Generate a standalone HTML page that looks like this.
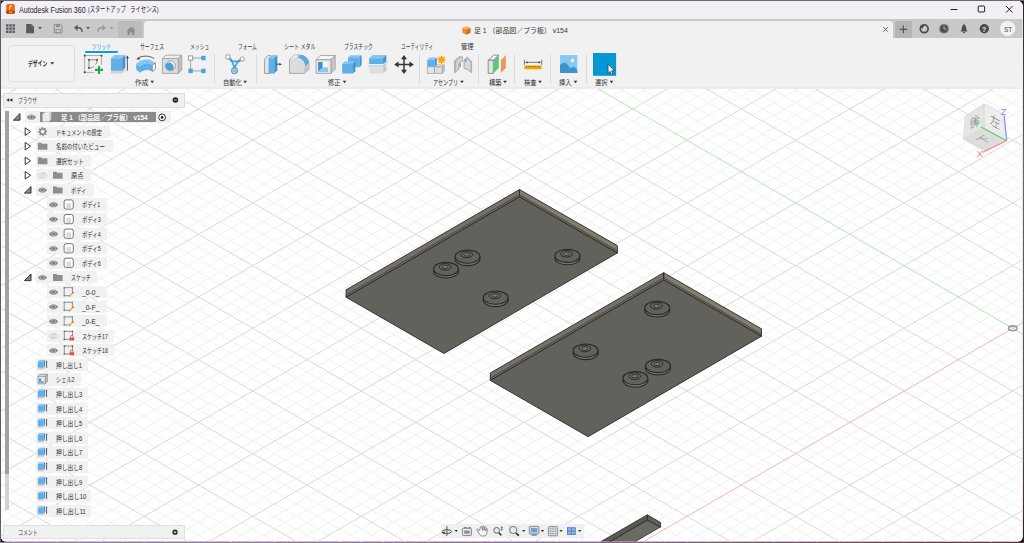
<!DOCTYPE html>
<html lang="ja"><head><meta charset="utf-8"><title>Autodesk Fusion 360</title>
<style>
html,body{margin:0;padding:0;width:1024px;height:543px;overflow:hidden;background:#17101a;}
#edge{position:absolute;left:0;top:0;width:1024px;height:543px;background:linear-gradient(#6c6878,#6c6878) 0 0/1024px 1.2px no-repeat,linear-gradient(90deg,#987e9e,#8a7090 55%,#55363f) 0 541.5px/1024px 1.5px no-repeat,linear-gradient(#5c5c70,#5c5c70) 0 0/1.2px 543px no-repeat,linear-gradient(#2a2226,#6a6068 30%,#5a4a50 80%,#3a1a20) 1022.600px 0/1.4px 543px no-repeat,#17101a}
body{font-family:"Liberation Sans","Noto Sans CJK JP",sans-serif;}
#win{position:absolute;left:0;top:0;width:1024px;height:543px;clip-path:inset(1px 1.3px 1.4px 1px round 5px);background:#fff;overflow:hidden}
#cv{position:absolute;left:0;top:0}
.tx{z-index:5;position:absolute;white-space:nowrap;line-height:20px;height:20px;transform-origin:0 50%;display:block}
.abs{position:absolute}
</style></head><body>
<div id="edge"></div>
<div id="win">
<svg id="cv" width="1024" height="543" viewBox="0 0 1024 543">
<rect width="1024" height="543" fill="#ffffff"/>
<path d="M-10.0 91.4L1034.0 -511.4M-10.0 116.5L1034.0 -486.3M-10.0 540.1L1034.0 1142.9M-10.0 129.0L1034.0 -473.8M-10.0 527.6L1034.0 1130.4M-10.0 141.6L1034.0 -461.2M-10.0 515.0L1034.0 1117.8M-10.0 154.1L1034.0 -448.7M-10.0 502.5L1034.0 1105.3M-10.0 179.2L1034.0 -423.6M-10.0 477.4L1034.0 1080.2M-10.0 191.7L1034.0 -411.1M-10.0 464.9L1034.0 1067.7M-10.0 204.2L1034.0 -398.6M-10.0 452.4L1034.0 1055.2M-10.0 216.8L1034.0 -386.0M-10.0 439.8L1034.0 1042.6M-10.0 241.8L1034.0 -360.9M-10.0 414.8L1034.0 1017.5M-10.0 254.4L1034.0 -348.4M-10.0 402.2L1034.0 1005.0M-10.0 266.9L1034.0 -335.9M-10.0 389.7L1034.0 992.5M-10.0 279.4L1034.0 -323.3M-10.0 377.2L1034.0 979.9M-10.0 304.5L1034.0 -298.3M-10.0 352.1L1034.0 954.9M-10.0 317.1L1034.0 -285.7M-10.0 339.5L1034.0 942.3M-10.0 329.6L1034.0 -273.2M-10.0 327.0L1034.0 929.8M-10.0 342.1L1034.0 -260.7M-10.0 314.5L1034.0 917.3M-10.0 367.2L1034.0 -235.6M-10.0 289.4L1034.0 892.2M-10.0 379.7L1034.0 -223.0M-10.0 276.9L1034.0 879.6M-10.0 392.3L1034.0 -210.5M-10.0 264.3L1034.0 867.1M-10.0 404.8L1034.0 -198.0M-10.0 251.8L1034.0 854.6M-10.0 429.9L1034.0 -172.9M-10.0 226.7L1034.0 829.5M-10.0 442.4L1034.0 -160.4M-10.0 214.2L1034.0 817.0M-10.0 455.0L1034.0 -147.8M-10.0 201.6L1034.0 804.4M-10.0 467.5L1034.0 -135.3M-10.0 189.1L1034.0 791.9M-10.0 492.6L1034.0 -110.2M-10.0 164.0L1034.0 766.8M-10.0 505.1L1034.0 -97.7M-10.0 151.5L1034.0 754.3M-10.0 517.6L1034.0 -85.2M-10.0 139.0L1034.0 741.8M-10.0 530.2L1034.0 -72.6M-10.0 126.4L1034.0 729.2M-10.0 555.2L1034.0 -47.5M-10.0 101.4L1034.0 704.1M-10.0 567.8L1034.0 -35.0M-10.0 88.8L1034.0 691.6M-10.0 580.3L1034.0 -22.5M-10.0 76.3L1034.0 679.1M-10.0 592.8L1034.0 -9.9M-10.0 63.8L1034.0 666.5M-10.0 617.9L1034.0 15.1M-10.0 38.7L1034.0 641.5M-10.0 630.5L1034.0 27.7M-10.0 26.1L1034.0 628.9M-10.0 643.0L1034.0 40.2M-10.0 13.6L1034.0 616.4M-10.0 655.5L1034.0 52.7M-10.0 1.1L1034.0 603.9M-10.0 680.6L1034.0 77.8M-10.0 -24.0L1034.0 578.8M-10.0 693.1L1034.0 90.4M-10.0 -36.5L1034.0 566.2M-10.0 705.7L1034.0 102.9M-10.0 -49.1L1034.0 553.7M-10.0 718.2L1034.0 115.4M-10.0 -61.6L1034.0 541.2M-10.0 743.3L1034.0 140.5M-10.0 -86.7L1034.0 516.1M-10.0 755.8L1034.0 153.0M-10.0 -99.2L1034.0 503.6M-10.0 768.4L1034.0 165.6M-10.0 -111.8L1034.0 491.0M-10.0 780.9L1034.0 178.1M-10.0 -124.3L1034.0 478.5M-10.0 806.0L1034.0 203.2M-10.0 -149.4L1034.0 453.4M-10.0 818.5L1034.0 215.7M-10.0 -161.9L1034.0 440.9M-10.0 831.0L1034.0 228.2M-10.0 -174.4L1034.0 428.4M-10.0 843.6L1034.0 240.8M-10.0 -187.0L1034.0 415.8M-10.0 868.6L1034.0 265.9M-10.0 -212.0L1034.0 390.7M-10.0 881.2L1034.0 278.4M-10.0 -224.6L1034.0 378.2M-10.0 893.7L1034.0 290.9M-10.0 -237.1L1034.0 365.7M-10.0 906.2L1034.0 303.5M-10.0 -249.6L1034.0 353.1M-10.0 931.3L1034.0 328.5M-10.0 -274.7L1034.0 328.1M-10.0 943.9L1034.0 341.1M-10.0 -287.3L1034.0 315.5M-10.0 956.4L1034.0 353.6M-10.0 -299.8L1034.0 303.0M-10.0 968.9L1034.0 366.1M-10.0 -312.3L1034.0 290.5M-10.0 994.0L1034.0 391.2M-10.0 -337.4L1034.0 265.4M-10.0 1006.5L1034.0 403.8M-10.0 -349.9L1034.0 252.8M-10.0 1019.1L1034.0 416.3M-10.0 -362.5L1034.0 240.3M-10.0 1031.6L1034.0 428.8M-10.0 -375.0L1034.0 227.8M-10.0 1056.7L1034.0 453.9M-10.0 -400.1L1034.0 202.7M-10.0 1069.2L1034.0 466.4M-10.0 -412.6L1034.0 190.2M-10.0 1081.8L1034.0 479.0M-10.0 -425.2L1034.0 177.6M-10.0 1094.3L1034.0 491.5M-10.0 -437.7L1034.0 165.1M-10.0 1119.4L1034.0 516.6M-10.0 -462.8L1034.0 140.0M-10.0 1131.9L1034.0 529.1M-10.0 -475.3L1034.0 127.5M-10.0 1144.4L1034.0 541.6M-10.0 -487.8L1034.0 115.0M-10.0 -500.4L1034.0 102.4" stroke="#f0f0f0" stroke-width="1" fill="none"/>
<path d="M-10.0 103.9L1034.0 -498.8M-10.0 166.6L1034.0 -436.2M-10.0 490.0L1034.0 1092.8M-10.0 229.3L1034.0 -373.5M-10.0 427.3L1034.0 1030.1M-10.0 292.0L1034.0 -310.8M-10.0 364.6L1034.0 967.4M-10.0 354.7L1034.0 -248.1M-10.0 301.9L1034.0 904.7M-10.0 417.3L1034.0 -185.4M-10.0 239.3L1034.0 842.0M-10.0 480.0L1034.0 -122.8M-10.0 176.6L1034.0 779.4M-10.0 542.7L1034.0 -60.1M-10.0 113.9L1034.0 716.7M-10.0 605.4L1034.0 2.6M-10.0 51.2L1034.0 654.0M-10.0 668.1L1034.0 65.3M-10.0 -11.5L1034.0 591.3M-10.0 730.7L1034.0 128.0M-10.0 -74.1L1034.0 528.6M-10.0 793.4L1034.0 190.6M-10.0 -136.8L1034.0 466.0M-10.0 856.1L1034.0 253.3M-10.0 -199.5L1034.0 403.3M-10.0 981.5L1034.0 378.7M-10.0 -324.9L1034.0 277.9M-10.0 1044.1L1034.0 441.4M-10.0 -387.5L1034.0 215.2M-10.0 1106.8L1034.0 504.0M-10.0 -450.2L1034.0 152.6M-10.0 -512.9L1034.0 89.9" stroke="#d9d9d9" stroke-width="1" fill="none"/>
<line x1="524.2" y1="46.2" x2="1045.3" y2="347.1" stroke="#a8eca8" stroke-width="1"/>
<line x1="578.5" y1="579.0" x2="1045.3" y2="309.5" stroke="#f6b4b4" stroke-width="1"/>
<ellipse cx="1012.8" cy="328.3" rx="4.2" ry="2.4" fill="none" stroke="#9a9a9a" stroke-width="1.6"/>
<polygon points="346.1,289.8 519.5,189.5 519.5,196.9 346.1,297.2" fill="#75726a" stroke="#2b2a27" stroke-width="0.9" stroke-linejoin="round" />
<polygon points="519.5,189.5 617.3,245.6 617.3,253.0 519.5,196.9" fill="#827f71" stroke="#2b2a27" stroke-width="0.9" stroke-linejoin="round" />
<polygon points="346.1,294.9 519.5,194.6 617.3,250.7 617.3,253.0 519.5,196.9 346.1,297.2" fill="#6a685f" stroke="#2f2e2a" stroke-width="0.55" stroke-linejoin="round" />
<polygon points="346.1,297.2 443.9,353.5 617.3,253.0 519.5,196.9" fill="#62615c" stroke="#2b2a27" stroke-width="0.9" stroke-linejoin="round" />
<line x1="519.5" y1="189.5" x2="519.5" y2="196.9" stroke="#2b2a27" stroke-width="0.7"/>
<ellipse cx="446.0" cy="271.4" rx="12.5" ry="6.6" fill="#77746a" stroke="#2a2925" stroke-width="1.1"/>
<ellipse cx="446.0" cy="269.0" rx="12.5" ry="6.6" fill="#62615b" stroke="#2a2925" stroke-width="1.1"/>
<ellipse cx="445.2" cy="266.9" rx="5.9" ry="3.3" fill="#676660" stroke="#2c2b27" stroke-width="1"/>
<ellipse cx="445.2" cy="266.9" rx="3.0" ry="1.7" fill="#7b7a72" stroke="#2c2b27" stroke-width="0.9"/>
<ellipse cx="467.5" cy="259.0" rx="12.5" ry="6.6" fill="#77746a" stroke="#2a2925" stroke-width="1.1"/>
<ellipse cx="467.5" cy="256.6" rx="12.5" ry="6.6" fill="#62615b" stroke="#2a2925" stroke-width="1.1"/>
<ellipse cx="466.7" cy="254.5" rx="5.9" ry="3.3" fill="#676660" stroke="#2c2b27" stroke-width="1"/>
<ellipse cx="466.7" cy="254.5" rx="3.0" ry="1.7" fill="#7b7a72" stroke="#2c2b27" stroke-width="0.9"/>
<ellipse cx="567.4" cy="258.2" rx="12.5" ry="6.6" fill="#77746a" stroke="#2a2925" stroke-width="1.1"/>
<ellipse cx="567.4" cy="255.8" rx="12.5" ry="6.6" fill="#62615b" stroke="#2a2925" stroke-width="1.1"/>
<ellipse cx="566.6" cy="253.7" rx="5.9" ry="3.3" fill="#676660" stroke="#2c2b27" stroke-width="1"/>
<ellipse cx="566.6" cy="253.7" rx="3.0" ry="1.7" fill="#7b7a72" stroke="#2c2b27" stroke-width="0.9"/>
<ellipse cx="495.7" cy="300.0" rx="12.5" ry="6.6" fill="#77746a" stroke="#2a2925" stroke-width="1.1"/>
<ellipse cx="495.7" cy="297.6" rx="12.5" ry="6.6" fill="#62615b" stroke="#2a2925" stroke-width="1.1"/>
<ellipse cx="494.9" cy="295.5" rx="5.9" ry="3.3" fill="#676660" stroke="#2c2b27" stroke-width="1"/>
<ellipse cx="494.9" cy="295.5" rx="3.0" ry="1.7" fill="#7b7a72" stroke="#2c2b27" stroke-width="0.9"/>
<polygon points="490.3,373.0 663.7,272.7 663.7,280.1 490.3,380.4" fill="#75726a" stroke="#2b2a27" stroke-width="0.9" stroke-linejoin="round" />
<polygon points="663.7,272.7 761.5,328.8 761.5,336.2 663.7,280.1" fill="#827f71" stroke="#2b2a27" stroke-width="0.9" stroke-linejoin="round" />
<polygon points="490.3,378.1 663.7,277.8 761.5,333.9 761.5,336.2 663.7,280.1 490.3,380.4" fill="#6a685f" stroke="#2f2e2a" stroke-width="0.55" stroke-linejoin="round" />
<polygon points="490.3,380.4 588.1,436.7 761.5,336.2 663.7,280.1" fill="#62615c" stroke="#2b2a27" stroke-width="0.9" stroke-linejoin="round" />
<line x1="663.7" y1="272.7" x2="663.7" y2="280.1" stroke="#2b2a27" stroke-width="0.7"/>
<ellipse cx="657.2" cy="310.4" rx="12.5" ry="6.6" fill="#77746a" stroke="#2a2925" stroke-width="1.1"/>
<ellipse cx="657.2" cy="308.0" rx="12.5" ry="6.6" fill="#62615b" stroke="#2a2925" stroke-width="1.1"/>
<ellipse cx="656.4" cy="305.9" rx="5.9" ry="3.3" fill="#676660" stroke="#2c2b27" stroke-width="1"/>
<ellipse cx="656.4" cy="305.9" rx="3.0" ry="1.7" fill="#7b7a72" stroke="#2c2b27" stroke-width="0.9"/>
<ellipse cx="585.6" cy="353.0" rx="12.5" ry="6.6" fill="#77746a" stroke="#2a2925" stroke-width="1.1"/>
<ellipse cx="585.6" cy="350.6" rx="12.5" ry="6.6" fill="#62615b" stroke="#2a2925" stroke-width="1.1"/>
<ellipse cx="584.8" cy="348.5" rx="5.9" ry="3.3" fill="#676660" stroke="#2c2b27" stroke-width="1"/>
<ellipse cx="584.8" cy="348.5" rx="3.0" ry="1.7" fill="#7b7a72" stroke="#2c2b27" stroke-width="0.9"/>
<ellipse cx="658.0" cy="368.4" rx="12.5" ry="6.6" fill="#77746a" stroke="#2a2925" stroke-width="1.1"/>
<ellipse cx="658.0" cy="366.0" rx="12.5" ry="6.6" fill="#62615b" stroke="#2a2925" stroke-width="1.1"/>
<ellipse cx="657.2" cy="363.9" rx="5.9" ry="3.3" fill="#676660" stroke="#2c2b27" stroke-width="1"/>
<ellipse cx="657.2" cy="363.9" rx="3.0" ry="1.7" fill="#7b7a72" stroke="#2c2b27" stroke-width="0.9"/>
<ellipse cx="635.4" cy="380.6" rx="12.5" ry="6.6" fill="#77746a" stroke="#2a2925" stroke-width="1.1"/>
<ellipse cx="635.4" cy="378.2" rx="12.5" ry="6.6" fill="#62615b" stroke="#2a2925" stroke-width="1.1"/>
<ellipse cx="634.6" cy="376.1" rx="5.9" ry="3.3" fill="#676660" stroke="#2c2b27" stroke-width="1"/>
<ellipse cx="634.6" cy="376.1" rx="3.0" ry="1.7" fill="#7b7a72" stroke="#2c2b27" stroke-width="0.9"/>
<polygon points="647.4,514.8 647.4,520.2 538.8,582.9 538.8,577.5" fill="#5a584f" stroke="#2b2a27" stroke-width="0.8" stroke-linejoin="round" />
<polygon points="647.4,520.2 660.6,526.9 552.0,589.6 538.8,582.9" fill="#6a6a65" stroke="#2b2a27" stroke-width="0.8" stroke-linejoin="round" />
<polygon points="647.4,514.8 660.6,522.5 660.6,526.9 647.4,520.2" fill="#605e56" stroke="#2b2a27" stroke-width="0.8" stroke-linejoin="round" />
<g opacity="0.76"><polygon points="984.2,103.8 965.2,116.3 963.5,139.5 984.2,127.9" fill="#dedede" stroke="#c4c4c4" stroke-width="0.6" stroke-linejoin="round"/><polygon points="984.2,103.8 1003.5,114.3 1006.7,140.8 984.2,127.9" fill="#e9e9e9" stroke="#c4c4c4" stroke-width="0.6" stroke-linejoin="round"/><polygon points="984.2,127.9 963.5,139.5 984.8,151.1 1006.7,140.8" fill="#d4d4d4" stroke="#c4c4c4" stroke-width="0.6" stroke-linejoin="round"/></g><text transform="matrix(0.790 -0.520 -0.070 0.967 974.5 122.2)" x="0" y="0" font-size="13" text-anchor="middle" dominant-baseline="central" fill="#787878" font-weight="300" font-family="Liberation Sans, Noto Sans CJK JP, sans-serif">後</text><text transform="matrix(0.804 0.438 0.000 1.000 995.1 122.2)" x="0" y="0" font-size="13.5" text-anchor="middle" dominant-baseline="central" fill="#787878" font-weight="300" font-family="Liberation Sans, Noto Sans CJK JP, sans-serif">左</text><text transform="matrix(0.863 -0.483 0.938 0.537 984.2 139.8)" x="0" y="0" font-size="11" text-anchor="middle" dominant-baseline="central" fill="#787878" font-weight="300" font-family="Liberation Sans, Noto Sans CJK JP, sans-serif">下</text><path d="M1006.7 140.8L1004.1 115.6" stroke="#9090ff" stroke-width="1.3"/><path d="M1006.7 140.8L980.9 127" stroke="#5cd65c" stroke-width="1.2"/><path d="M1006.7 140.8L982.4 152.4" stroke="#ff8a8a" stroke-width="1.2"/><text x="1003.6" y="115.0" font-size="9.5" font-weight="400" text-anchor="middle" fill="#8a8aff" font-family="Liberation Sans, sans-serif">Z</text><text x="979.6" y="156.8" font-size="9.5" font-weight="400" text-anchor="middle" fill="#ff8080" font-family="Liberation Sans, sans-serif">X</text><text x="976.8" y="126.6" font-size="9.5" font-weight="400" text-anchor="middle" fill="#55d455" font-family="Liberation Sans, sans-serif">Y</text>
</svg>
<div class="abs" style="left:0.0px;top:0.0px;width:1024.0px;height:19.2px;background:#f3eff7;"></div>
<span id="t0" class="tx " style="left:19.1px;top:0.6px;font-size:8.2px;color:#1b1b1b;font-weight:400;transform:scaleX(0.8671)">Autodesk Fusion 360</span>
<span id="t1" class="tx " style="left:88.0px;top:0.4px;font-size:7.5px;color:#1b1b1b;font-weight:400;transform:scaleX(0.6909)">(スタートアップ</span>
<span id="t2" class="tx " style="left:129.7px;top:0.4px;font-size:7.5px;color:#1b1b1b;font-weight:400;transform:scaleX(0.7175)">ライセンス)</span>
<div class="abs" style="left:0.0px;top:19.2px;width:1024.0px;height:18.8px;background:#c9c9c9;"></div>
<div class="abs" style="left:118.0px;top:21.0px;width:24.0px;height:17.0px;background:#bcbcbc;border-radius:3px 3px 0 0;"></div>
<div class="abs" style="left:143.8px;top:21.0px;width:749.4px;height:17.2px;background:#f1f1f1;border-radius:4px 4px 0 0;"></div>
<div class="abs" style="left:895.0px;top:21.0px;width:16.8px;height:17.0px;background:#b4b4b4;border-radius:2px 2px 0 0;"></div>
<span id="t3" class="tx " style="left:473.7px;top:21.3px;font-size:7.2px;color:#333;font-weight:400;transform:scaleX(0.9625)">足 1 （部品図／プラ板） v154</span>
<span id="t4" class="tx " style="left:982.2px;top:19.9px;font-size:8px;color:#f0f0f0;font-weight:700;transform:scaleX(0.8588)">?</span>
<span id="t5" class="tx " style="left:1003.6px;top:19.5px;font-size:7.5px;color:#444;font-weight:400;transform:scaleX(0.8547)">ST</span>
<div class="abs" style="left:0.0px;top:38.0px;width:1024.0px;height:49.0px;background:#f1f1f1;"></div>
<div class="abs" style="left:0.0px;top:86.9px;width:1024.0px;height:2.5px;background:linear-gradient(#ececec,#ebebeb 70%,#f4f4f4);"></div>
<div class="abs" style="left:1021.8px;top:19.2px;width:1.6px;height:70.0px;background:#f1f1f1;"></div>
<div class="abs" style="left:1.0px;top:19.2px;width:1.0px;height:18.8px;background:#d4d4d4;"></div>
<div class="abs" style="left:7.5px;top:44.6px;width:67.5px;height:37.0px;background:#f3f3f3;border:1px solid #dfdfdf;border-radius:4px;box-sizing:border-box;"></div>
<span id="t6" class="tx " style="left:27.5px;top:54.1px;font-size:7.1px;color:#2b2b2b;font-weight:700;transform:scaleX(0.6802)">デザイン</span>
<span id="t7" class="tx " style="left:92.0px;top:36.6px;font-size:7.1px;color:#1b8fd6;font-weight:400;transform:scaleX(0.6696)">ソリッド</span>
<span id="t8" class="tx " style="left:139.7px;top:36.6px;font-size:7.1px;color:#333;font-weight:400;transform:scaleX(0.6848)">サーフェス</span>
<span id="t9" class="tx " style="left:189.5px;top:36.6px;font-size:7.1px;color:#333;font-weight:400;transform:scaleX(0.6837)">メッシュ</span>
<span id="t10" class="tx " style="left:237.6px;top:36.6px;font-size:7.1px;color:#333;font-weight:400;transform:scaleX(0.6638)">フォーム</span>
<span id="t11" class="tx " style="left:284.4px;top:36.6px;font-size:7.1px;color:#333;font-weight:400;transform:scaleX(0.7094)">シート メタル</span>
<span id="t12" class="tx " style="left:344.4px;top:36.6px;font-size:7.1px;color:#333;font-weight:400;transform:scaleX(0.6789)">プラスチック</span>
<span id="t13" class="tx " style="left:401.0px;top:36.6px;font-size:7.1px;color:#333;font-weight:400;transform:scaleX(0.6617)">ユーティリティ</span>
<span id="t14" class="tx " style="left:461.2px;top:36.6px;font-size:7.1px;color:#333;font-weight:400;transform:scaleX(0.8811)">管理</span>
<div class="abs" style="left:84.8px;top:50.8px;width:33.6px;height:1.9px;background:#0f9ad8;border-radius:1px;"></div>
<span id="t15" class="tx " style="left:135.0px;top:72.7px;font-size:7.1px;color:#333;font-weight:400;transform:scaleX(0.9374)">作成</span>
<span id="t16" class="tx " style="left:223.2px;top:72.7px;font-size:7.1px;color:#333;font-weight:400;transform:scaleX(0.8787)">自動化</span>
<span id="t17" class="tx " style="left:327.8px;top:72.7px;font-size:7.1px;color:#333;font-weight:400;transform:scaleX(0.8811)">修正</span>
<span id="t18" class="tx " style="left:433.3px;top:72.7px;font-size:7.1px;color:#333;font-weight:400;transform:scaleX(0.7146)">アセンブリ</span>
<span id="t19" class="tx " style="left:488.5px;top:72.7px;font-size:7.1px;color:#333;font-weight:400;transform:scaleX(0.8811)">構築</span>
<span id="t20" class="tx " style="left:523.5px;top:72.7px;font-size:7.1px;color:#333;font-weight:400;transform:scaleX(0.8811)">検査</span>
<span id="t21" class="tx " style="left:559.0px;top:72.7px;font-size:7.1px;color:#333;font-weight:400;transform:scaleX(0.8811)">挿入</span>
<span id="t22" class="tx " style="left:595.0px;top:72.7px;font-size:7.1px;color:#333;font-weight:400;transform:scaleX(0.8670)">選択</span>
<div class="abs" style="left:213.8px;top:54.3px;width:1.0px;height:30.0px;background:#dcdcdc;"></div>
<div class="abs" style="left:255.8px;top:54.3px;width:1.0px;height:30.0px;background:#dcdcdc;"></div>
<div class="abs" style="left:419.3px;top:54.3px;width:1.0px;height:30.0px;background:#dcdcdc;"></div>
<div class="abs" style="left:477.9px;top:54.3px;width:1.0px;height:30.0px;background:#dcdcdc;"></div>
<div class="abs" style="left:514.0px;top:54.3px;width:1.0px;height:30.0px;background:#dcdcdc;"></div>
<div class="abs" style="left:549.9px;top:54.3px;width:1.0px;height:30.0px;background:#dcdcdc;"></div>
<div class="abs" style="left:586.0px;top:54.3px;width:1.0px;height:30.0px;background:#dcdcdc;"></div>
<div class="abs" style="left:3.3px;top:92.5px;width:182.0px;height:15.0px;background:#f0f0f0;border:1px solid #dedede;box-sizing:border-box;"></div>
<span id="t23" class="tx " style="left:18.2px;top:90.9px;font-size:7.1px;color:#444;font-weight:400;transform:scaleX(0.6696)">ブラウザ</span>
<div class="abs" style="left:5.4px;top:111.0px;width:3.3px;height:399.0px;background:#d2d2d2;"></div>
<div class="abs" style="left:5.4px;top:111.0px;width:3.3px;height:363.0px;background:#a2a2a2;"></div>
<div class="abs" style="left:25.0px;top:110.9px;width:146.0px;height:12.2px;background:#f1f1f1;"></div>
<div class="abs" style="left:40.0px;top:112.1px;width:115.6px;height:9.7px;background:#8b8b8b;"></div>
<span id="t24" class="tx " style="left:60.5px;top:107.9px;font-size:7.1px;color:#ffffff;font-weight:700;transform:scaleX(0.8967)">足 1 （部品図／プラ板） v154</span>
<div class="abs" style="left:36.0px;top:125.5px;width:74.0px;height:12.2px;background:#f1f1f1;"></div>
<span id="t25" class="tx " style="left:56.2px;top:122.5px;font-size:7.1px;color:#2c2c2c;font-weight:400;transform:scaleX(0.7174)">ドキュメントの設定</span>
<div class="abs" style="left:36.0px;top:140.1px;width:76.5px;height:12.2px;background:#f1f1f1;"></div>
<span id="t26" class="tx " style="left:56.2px;top:137.1px;font-size:7.1px;color:#2c2c2c;font-weight:400;transform:scaleX(0.7644)">名前の付いたビュー</span>
<div class="abs" style="left:36.0px;top:154.7px;width:54.5px;height:12.2px;background:#f1f1f1;"></div>
<span id="t27" class="tx " style="left:56.2px;top:151.7px;font-size:7.1px;color:#2c2c2c;font-weight:400;transform:scaleX(0.7838)">選択セット</span>
<div class="abs" style="left:36.0px;top:169.2px;width:55.0px;height:12.2px;background:#f1f1f1;"></div>
<span id="t28" class="tx " style="left:71.4px;top:166.2px;font-size:7.1px;color:#2c2c2c;font-weight:400;transform:scaleX(0.8881)">原点</span>
<div class="abs" style="left:35.8px;top:183.8px;width:58.0px;height:12.2px;background:#f1f1f1;"></div>
<span id="t29" class="tx " style="left:71.2px;top:180.8px;font-size:7.1px;color:#2c2c2c;font-weight:400;transform:scaleX(0.7261)">ボディ</span>
<div class="abs" style="left:47.0px;top:198.4px;width:59.7px;height:12.2px;background:#f1f1f1;"></div>
<span id="t30" class="tx " style="left:82.0px;top:195.4px;font-size:7.1px;color:#2c2c2c;font-weight:400;transform:scaleX(0.7358)">ボディ1</span>
<div class="abs" style="left:47.0px;top:213.0px;width:59.7px;height:12.2px;background:#f1f1f1;"></div>
<span id="t31" class="tx " style="left:82.0px;top:210.0px;font-size:7.1px;color:#2c2c2c;font-weight:400;transform:scaleX(0.7520)">ボディ3</span>
<div class="abs" style="left:47.0px;top:227.6px;width:59.7px;height:12.2px;background:#f1f1f1;"></div>
<span id="t32" class="tx " style="left:82.0px;top:224.6px;font-size:7.1px;color:#2c2c2c;font-weight:400;transform:scaleX(0.7520)">ボディ4</span>
<div class="abs" style="left:47.0px;top:242.2px;width:59.7px;height:12.2px;background:#f1f1f1;"></div>
<span id="t33" class="tx " style="left:82.0px;top:239.2px;font-size:7.1px;color:#2c2c2c;font-weight:400;transform:scaleX(0.7520)">ボディ5</span>
<div class="abs" style="left:47.0px;top:256.8px;width:59.7px;height:12.2px;background:#f1f1f1;"></div>
<span id="t34" class="tx " style="left:82.0px;top:253.8px;font-size:7.1px;color:#2c2c2c;font-weight:400;transform:scaleX(0.7520)">ボディ6</span>
<div class="abs" style="left:35.8px;top:271.3px;width:60.8px;height:12.2px;background:#f1f1f1;"></div>
<span id="t35" class="tx " style="left:71.2px;top:268.3px;font-size:7.1px;color:#2c2c2c;font-weight:400;transform:scaleX(0.6978)">スケッチ</span>
<div class="abs" style="left:47.0px;top:285.9px;width:59.7px;height:12.2px;background:#f1f1f1;"></div>
<span id="t36" class="tx " style="left:82.0px;top:282.9px;font-size:7.1px;color:#2c2c2c;font-weight:400;transform:scaleX(0.9583)">_0-0_</span>
<div class="abs" style="left:47.0px;top:300.5px;width:59.7px;height:12.2px;background:#f1f1f1;"></div>
<span id="t37" class="tx " style="left:82.0px;top:297.5px;font-size:7.1px;color:#2c2c2c;font-weight:400;transform:scaleX(0.9390)">_0-F_</span>
<div class="abs" style="left:47.0px;top:315.1px;width:59.7px;height:12.2px;background:#f1f1f1;"></div>
<span id="t38" class="tx " style="left:82.0px;top:312.1px;font-size:7.1px;color:#2c2c2c;font-weight:400;transform:scaleX(0.9188)">_0-E_</span>
<div class="abs" style="left:47.0px;top:329.7px;width:67.3px;height:12.2px;background:#f1f1f1;"></div>
<span id="t39" class="tx " style="left:82.2px;top:326.7px;font-size:7.1px;color:#2c2c2c;font-weight:400;transform:scaleX(0.7087)">スケッチ17</span>
<div class="abs" style="left:47.0px;top:344.3px;width:67.3px;height:12.2px;background:#f1f1f1;"></div>
<span id="t40" class="tx " style="left:82.2px;top:341.3px;font-size:7.1px;color:#2c2c2c;font-weight:400;transform:scaleX(0.7087)">スケッチ18</span>
<div class="abs" style="left:36.3px;top:358.8px;width:51.7px;height:12.2px;background:#f1f1f1;"></div>
<span id="t41" class="tx " style="left:56.3px;top:355.8px;font-size:7.1px;color:#2c2c2c;font-weight:400;transform:scaleX(0.8012)">押し出し1</span>
<div class="abs" style="left:36.3px;top:373.4px;width:44.3px;height:12.2px;background:#f1f1f1;"></div>
<span id="t42" class="tx " style="left:56.3px;top:370.4px;font-size:7.1px;color:#2c2c2c;font-weight:400;transform:scaleX(0.7331)">シェル2</span>
<div class="abs" style="left:36.3px;top:388.0px;width:51.7px;height:12.2px;background:#f1f1f1;"></div>
<span id="t43" class="tx " style="left:56.3px;top:385.0px;font-size:7.1px;color:#2c2c2c;font-weight:400;transform:scaleX(0.8135)">押し出し3</span>
<div class="abs" style="left:36.3px;top:402.6px;width:51.7px;height:12.2px;background:#f1f1f1;"></div>
<span id="t44" class="tx " style="left:56.3px;top:399.6px;font-size:7.1px;color:#2c2c2c;font-weight:400;transform:scaleX(0.8135)">押し出し4</span>
<div class="abs" style="left:36.3px;top:417.2px;width:51.7px;height:12.2px;background:#f1f1f1;"></div>
<span id="t45" class="tx " style="left:56.3px;top:414.2px;font-size:7.1px;color:#2c2c2c;font-weight:400;transform:scaleX(0.8135)">押し出し5</span>
<div class="abs" style="left:36.3px;top:431.8px;width:51.7px;height:12.2px;background:#f1f1f1;"></div>
<span id="t46" class="tx " style="left:56.3px;top:428.8px;font-size:7.1px;color:#2c2c2c;font-weight:400;transform:scaleX(0.8135)">押し出し6</span>
<div class="abs" style="left:36.3px;top:446.4px;width:51.7px;height:12.2px;background:#f1f1f1;"></div>
<span id="t47" class="tx " style="left:56.3px;top:443.4px;font-size:7.1px;color:#2c2c2c;font-weight:400;transform:scaleX(0.8135)">押し出し7</span>
<div class="abs" style="left:36.3px;top:460.9px;width:51.7px;height:12.2px;background:#f1f1f1;"></div>
<span id="t48" class="tx " style="left:56.3px;top:457.9px;font-size:7.1px;color:#2c2c2c;font-weight:400;transform:scaleX(0.8135)">押し出し8</span>
<div class="abs" style="left:36.3px;top:475.5px;width:51.7px;height:12.2px;background:#f1f1f1;"></div>
<span id="t49" class="tx " style="left:56.3px;top:472.5px;font-size:7.1px;color:#2c2c2c;font-weight:400;transform:scaleX(0.8135)">押し出し9</span>
<div class="abs" style="left:36.3px;top:490.1px;width:55.2px;height:12.2px;background:#f1f1f1;"></div>
<span id="t50" class="tx " style="left:56.3px;top:487.1px;font-size:7.1px;color:#2c2c2c;font-weight:400;transform:scaleX(0.8355)">押し出し10</span>
<div class="abs" style="left:36.3px;top:504.7px;width:55.2px;height:12.2px;background:#f1f1f1;"></div>
<span id="t51" class="tx " style="left:56.3px;top:501.7px;font-size:7.1px;color:#2c2c2c;font-weight:400;transform:scaleX(0.8364)">押し出し11</span>
<div class="abs" style="left:440.6px;top:524.3px;width:143.0px;height:13.3px;background:#f0f0f0;"></div>
<div class="abs" style="left:3.3px;top:525.0px;width:182.0px;height:14.0px;background:#f1f1f1;border:1px solid #e0e0e0;box-sizing:border-box;"></div>
<span id="t52" class="tx " style="left:18.0px;top:523.1px;font-size:7.1px;color:#444;font-weight:400;transform:scaleX(0.6943)">コメント</span>
<svg class="abs" style="left:0;top:0" width="1024" height="543" viewBox="0 0 1024 543">
<rect x="6.2" y="4.1" width="8.6" height="9.7" rx="1.6" fill="#f2690d"/>
<path d="M6.2 10.8h8.6v1.6a1.4 1.4 0 0 1-1.4 1.4h-5.8a1.4 1.4 0 0 1-1.4-1.4z" fill="#a94608"/>
<rect x="9.0" y="11.7" width="3.2" height="0.9" fill="#f6d9c0"/>
<path d="M9.7 5.6h2.2l-0.3 1h-1.0l-0.5 2.6h-0.9z" fill="#fff"/>
<path d="M950.5 9.5h7" stroke="#222" stroke-width="1"/>
<rect x="978.2" y="6" width="6.4" height="6" rx="0.8" fill="none" stroke="#222" stroke-width="1"/>
<path d="M1006 6l6.6 6.6M1012.6 6l-6.6 6.6" stroke="#222" stroke-width="1"/>
<polygon points="50.2,62.2 54.4,62.2 52.3,64.6" fill="#333"/>
<polygon points="150.4,80.8 154.0,80.8 152.2,83.2" fill="#333"/>
<polygon points="243.4,80.8 247.0,80.8 245.2,83.2" fill="#333"/>
<polygon points="342.7,80.8 346.3,80.8 344.5,83.2" fill="#333"/>
<polygon points="460.2,80.8 463.8,80.8 462.0,83.2" fill="#333"/>
<polygon points="503.2,80.8 506.8,80.8 505.0,83.2" fill="#333"/>
<polygon points="538.2,80.8 541.8,80.8 540.0,83.2" fill="#333"/>
<polygon points="573.7,80.8 577.3,80.8 575.5,83.2" fill="#333"/>
<polygon points="609.7,80.8 613.3,80.8 611.5,83.2" fill="#333"/>
<rect x="84.7" y="55.6" width="16.8" height="16.7" fill="none" stroke="#9c9c9c" stroke-width="0.8"/><rect x="83.8" y="54.7" width="1.8" height="1.8" fill="#444"/><rect x="100.6" y="54.7" width="1.8" height="1.8" fill="#444"/><rect x="83.8" y="71.4" width="1.8" height="1.8" fill="#444"/><path d="M89 59.8h8M89 59.8v8.2M97 59.8c0 4.6-3.4 8.2-8 8.2" fill="none" stroke="#777" stroke-width="0.8"/><rect x="88.1" y="58.9" width="1.8" height="1.8" fill="#555"/><rect x="96.1" y="58.9" width="1.8" height="1.8" fill="#555"/><rect x="88.1" y="67.1" width="1.8" height="1.8" fill="#555"/><rect x="94.2" y="64.8" width="9" height="9" fill="#f0f0f0"/><path d="M95 69.9h8M99 65.9v8" stroke="#1ea94b" stroke-width="2.1"/>
<polygon points="111.0,70.7 122.2,70.7 125.3,68.4 125.3,70.6 122.2,73.4 111.0,73.4" fill="#d0d0d0"/><polygon points="111.0,58.2 114.1,55.1 125.3,55.1 122.2,58.2" fill="#86c6f6"/><polygon points="122.2,58.2 125.3,55.1 125.3,67.6 122.2,70.7" fill="#3e90cf"/><polygon points="111.0,58.2 122.2,58.2 122.2,70.7 111.0,70.7" fill="#62aee6"/><path d="M127.4 70.7v-13.6" stroke="#333" stroke-width="0.8"/><path d="M125.9 58.2l1.5-2.8l1.5 2.8z" fill="#333"/>
<path d="M154.2 58.8c-4-3.4-12-3.6-16.6-0.4" fill="none" stroke="#333" stroke-width="0.8"/><path d="M136.4 59.4l2.8-2.4l0.6 2.4z" fill="#333"/><path d="M136.3 63.7c5-5.4 13.6-5.6 19.1-0.8l-3.1 2.3c-3.6-2.8-8.6-2.6-12.6 1.4z" fill="#86c6f6"/><path d="M136.3 63.7l3.4 2.9c4-4 9-4.2 12.6-1.4v6.3c-3.6-2.4-8.6-2.2-12.4 1.2l-3.6-3.2z" fill="#62aee6"/><polygon points="152.3,65.2 155.4,62.9 155.4,69.1 152.3,71.5" fill="#fff" stroke="#777" stroke-width="0.8" stroke-linejoin="round"/>
<polygon points="162.4,58.6 165.8,55.2 181.7,55.2 178.3,58.6" fill="#eeeeee" stroke="#9a9a9a" stroke-width="0.8" stroke-linejoin="round"/><polygon points="178.3,58.6 181.7,55.2 181.7,70.0 178.3,73.4" fill="#c2c2c2" stroke="#9a9a9a" stroke-width="0.8" stroke-linejoin="round"/><polygon points="162.4,58.6 178.3,58.6 178.3,73.4 162.4,73.4" fill="#dedede" stroke="#9a9a9a" stroke-width="0.8" stroke-linejoin="round"/><clipPath id="hc"><circle cx="170.4" cy="65.9" r="4.6"/></clipPath><circle cx="170.4" cy="65.9" r="5" fill="#ffffff" stroke="#8e8e8e" stroke-width="0.9"/><circle cx="169" cy="67.2" r="4.7" fill="#4a9fdf" clip-path="url(#hc)"/>
<path d="M190.6 58h12.8M190.6 58v12.9M190.6 70.9h12.8" stroke="#9a9a9a" stroke-width="0.9" fill="none"/><rect x="188.5" y="55.9" width="4.2" height="4.2" fill="#fff" stroke="#8a8a8a" stroke-width="0.8"/><rect x="201.2" y="55.8" width="4.4" height="4.4" fill="#4aa3e2"/><rect x="188.4" y="68.7" width="4.4" height="4.4" fill="#4aa3e2"/><rect x="201.2" y="68.7" width="4.4" height="4.4" fill="#4aa3e2"/>
<path d="M228.4 57.4L232.6 61.8M241.8 59.2L237.3 61.9" stroke="#4a9fdc" stroke-width="2.3" fill="none" stroke-linecap="round"/><path d="M232 61.3h6l-3.500 6.300z" fill="#f1f1f1" stroke="#4a9fdc" stroke-width="1.700" stroke-linejoin="round"/><path d="M234.5 66.5v2" stroke="#4a9fdc" stroke-width="2.200"/><rect x="225.9" y="54.9" width="4" height="4" rx="0.6" fill="#fff" stroke="#8e8e8e" stroke-width="0.9"/><polygon points="242.2,56.6 244.4,58.2 243.6,60.9 240.8,60.9 240.0,58.2" fill="#fff" stroke="#8e8e8e" stroke-width="0.9" stroke-linejoin="round"/><circle cx="234.5" cy="70.8" r="2.9" fill="#cfcfcf" stroke="#4a9fdc" stroke-width="1.1"/><circle cx="234.5" cy="70.8" r="1.2" fill="#aaa"/>
<path d="M264.6 73.4v-14.5l3.2-3.4h2.4v17.9z" fill="#e6e6e6" stroke="#8e8e8e" stroke-width="0.8"/><polygon points="268.5,58.2 271.6,55.1 277.3,55.1 274.2,58.2" fill="#86c6f6"/><polygon points="274.2,58.2 277.3,55.1 277.3,70.3 274.2,73.4" fill="#3e90cf"/><polygon points="268.5,58.2 274.2,58.2 274.2,73.4 268.5,73.4" fill="#62aee6"/><path d="M275.8 64.2h4" stroke="#333" stroke-width="0.8"/><path d="M279.4 62.9l2.4 1.3l-2.4 1.3z" fill="#333"/>
<path d="M289.5 73.4v-13.6l4.7-4.7h6c5 0.6 8.4 3.6 8.8 8.6v5.8l-4.8 3.9z" fill="#dcdcdc" stroke="#9a9a9a" stroke-width="0.8"/><path d="M304.2 73.4v-6.2l4.8-3.5v5.8z" fill="#c6c6c6"/><path d="M289.8 59.8l4.5-4.5h3.5l-2.6 2.6c-2 0.4-3.6 0.9-5.4 1.9z" fill="#efefef"/><path d="M297.3 57.6l3.2-2.6c4.8 0.6 8 3.4 8.5 7.8l-3.6 3.8c-0.6-5-3.4-8.2-8.1-9z" fill="#5aaae6"/>
<polygon points="316.0,59.8 320.3,55.5 335.2,55.5 330.9,59.8" fill="#f4f4f4" stroke="#9a9a9a" stroke-width="0.8" stroke-linejoin="round"/><polygon points="330.9,59.8 335.2,55.5 335.2,69.1 330.9,73.4" fill="#c8c8c8" stroke="#9a9a9a" stroke-width="0.8" stroke-linejoin="round"/><polygon points="316.0,59.8 330.9,59.8 330.9,73.4 316.0,73.4" fill="#e9e9e9" stroke="#9a9a9a" stroke-width="0.8" stroke-linejoin="round"/><polygon points="318.1,61.9 322.7,61.9 322.7,67.2 318.1,71.9" fill="#3d8fcd"/><polygon points="318.1,71.9 322.7,67.2 328.0,67.2 328.0,71.9" fill="#86c8f8"/><polygon points="322.7,61.9 328.0,61.9 328.0,67.2 322.7,67.2" fill="#f6f6f6"/>
<polygon points="348.0,57.4 350.2,55.2 361.6,55.2 359.4,57.4" fill="#86c6f6"/><polygon points="359.4,57.4 361.6,55.2 361.6,65.0 359.4,67.2" fill="#3e90cf"/><polygon points="348.0,57.4 359.4,57.4 359.4,67.2 348.0,67.2" fill="#62aee6"/><polygon points="342.2,63.7 344.4,61.5 355.3,61.5 353.1,63.7" fill="#86c6f6"/><polygon points="353.1,63.7 355.3,61.5 355.3,71.2 353.1,73.4" fill="#3e90cf"/><polygon points="342.2,63.7 353.1,63.7 353.1,73.4 342.2,73.4" fill="#62aee6"/>
<polygon points="369.2,67.6 372.5,64.3 386.4,64.3 383.1,67.6" fill="#f2ece4"/><polygon points="383.1,67.6 386.4,64.3 386.4,70.1 383.1,73.4" fill="#c6c6c6"/><polygon points="369.2,67.6 383.1,67.6 383.1,73.4 369.2,73.4" fill="#dedede"/><path d="M368.2 66h14.9l4.6-4.7" stroke="#8ccaf6" stroke-width="1.1" fill="none"/><polygon points="369.2,58.2 372.4,55.0 386.3,55.0 383.1,58.2" fill="#86c6f6"/><polygon points="383.1,58.2 386.3,55.0 386.3,60.9 383.1,64.1" fill="#3e90cf"/><polygon points="369.2,58.2 383.1,58.2 383.1,64.1 369.2,64.1" fill="#62aee6"/>
<path d="M396.5 64.5h15M404 57v15" stroke="#333" stroke-width="1.5"/><polygon points="394.2,64.5 398.6,61.6 398.6,67.4" fill="#333"/><polygon points="413.8,64.5 409.4,61.6 409.4,67.4" fill="#333"/><polygon points="404.0,54.9 401.0,59.2 407.0,59.2" fill="#333"/><polygon points="404.0,74.0 401.0,69.8 407.0,69.8" fill="#333"/>
<polygon points="434.5,66.8 436.4,64.9 444.2,64.9 442.3,66.8" fill="#f0f0f0" stroke="#a0a0a0" stroke-width="0.7" stroke-linejoin="round"/><polygon points="442.3,66.8 444.2,64.9 444.2,71.5 442.3,73.4" fill="#c4c4c4" stroke="#a0a0a0" stroke-width="0.7" stroke-linejoin="round"/><polygon points="434.5,66.8 442.3,66.8 442.3,73.4 434.5,73.4" fill="#dedede" stroke="#a0a0a0" stroke-width="0.7" stroke-linejoin="round"/><rect x="427.2" y="66.8" width="7.3" height="6.6" fill="#e2e2e2" stroke="#a0a0a0" stroke-width="0.7"/><polygon points="427.2,59.8 429.5,57.5 436.8,57.5 434.5,59.8" fill="#86c6f6"/><polygon points="434.5,59.8 436.8,57.5 436.8,64.5 434.5,66.8" fill="#3e90cf"/><polygon points="427.2,59.8 434.5,59.8 434.5,66.8 427.2,66.8" fill="#62aee6"/><polygon points="441.5,54.9 442.5,57.3 445.0,56.3 444.0,58.8 446.4,59.8 444.0,60.8 445.0,63.3 442.5,62.3 441.5,64.7 440.5,62.3 438.0,63.3 439.0,60.8 436.6,59.8 439.0,58.8 438.0,56.3 440.5,57.3" fill="#f9a800"/>
<polygon points="454.4,60.9 459.5,56.6 462.6,57.2 462.6,61.0 459.0,63.3 459.0,69.1 454.8,72.7" fill="#d2d2d2" stroke="#9a9a9a" stroke-width="0.8" stroke-linejoin="round"/><polygon points="454.4,60.9 459.5,56.6 460.2,57.2 456.0,61.6 456.0,71.6 454.8,72.7" fill="#b4b4b4"/><polygon points="464.1,60.2 467.3,57.0 471.6,61.7 471.6,72.7 467.0,69.2 464.1,68.4" fill="#dadada" stroke="#9a9a9a" stroke-width="0.8" stroke-linejoin="round"/><polygon points="467.3,57.0 471.6,61.7 471.6,72.7 470.2,71.6 470.2,62.4 466.6,58.0" fill="#b8b8b8"/><rect x="459.6" y="63.4" width="1.3" height="3.4" fill="#4aa3e2"/><polygon points="465.0,59.6 466.6,58.4 466.6,61.2 465.0,62.6" fill="#4aa3e2"/>
<polygon points="488.2,60.2 493.7,55.1 498.8,55.1 493.3,60.2" fill="#f4f4f4" stroke="#777" stroke-width="0.8" stroke-linejoin="round"/><polygon points="488.2,60.2 493.3,60.2 493.3,73.4 488.2,73.4" fill="#e4e4e4" stroke="#777" stroke-width="0.8" stroke-linejoin="round"/><polygon points="493.3,60.2 498.8,55.1 498.8,68.0 493.3,73.4" fill="#5cc580"/><polygon points="500.9,60.2 505.8,55.1 505.8,68.0 500.9,73.0" fill="#e8985c"/>
<path d="M524.5 59.8v5M541.7 59.8v5M526 62.3h14.2" stroke="#555" stroke-width="0.8" fill="none"/><polygon points="525.2,62.3 527.6,61.2 527.6,63.4" fill="#444"/><polygon points="541.0,62.3 538.6,61.2 538.6,63.4" fill="#444"/><rect x="524.4" y="65.6" width="17.3" height="3.6" rx="0.5" fill="#f7a600"/><path d="M526 66.6h14.4" stroke="#8a5a00" stroke-width="0.9" stroke-dasharray="0.9 0.9"/>
<rect x="560" y="55.1" width="17.3" height="17.9" fill="#86c8fa"/><path d="M560 73v-8c1.8-1.6 3.6-2.6 5.2-2.2c2.2 0.8 3.6 4.2 5.4 5.4c1.4-0.6 2.2-1.6 3.2-1.4c1.4 0.4 2.4 2 3.5 3.2v3z" fill="#3f90cf"/><circle cx="572.5" cy="60.4" r="1.8" fill="#fdf6b2"/>
<rect x="593" y="53" width="23.1" height="22.8" fill="#0696d7"/><circle cx="603.6" cy="63" r="8.3" fill="none" stroke="#35b56a" stroke-width="0.8" stroke-dasharray="1.4 1.6"/><path d="M608 64.2l0.2 9l2-1.8l1.4 3l1.4-0.7l-1.4-2.9l2.7-0.2z" fill="#fff" stroke="#222" stroke-width="0.6" stroke-linejoin="round"/>
<rect x="6.1" y="24.2" width="2.4" height="2.4" fill="#5a5a5a"/><rect x="6.1" y="27.4" width="2.4" height="2.4" fill="#5a5a5a"/><rect x="6.1" y="30.6" width="2.4" height="2.4" fill="#5a5a5a"/><rect x="9.3" y="24.2" width="2.4" height="2.4" fill="#5a5a5a"/><rect x="9.3" y="27.4" width="2.4" height="2.4" fill="#5a5a5a"/><rect x="9.3" y="30.6" width="2.4" height="2.4" fill="#5a5a5a"/><rect x="12.5" y="24.2" width="2.4" height="2.4" fill="#5a5a5a"/><rect x="12.5" y="27.4" width="2.4" height="2.4" fill="#5a5a5a"/><rect x="12.5" y="30.6" width="2.4" height="2.4" fill="#5a5a5a"/>
<path d="M26.2 24h5.2l2.6 2.6v6.6h-7.8z" fill="#5a5a5a"/><path d="M31.4 24v2.6h2.6" fill="#8a8a8a"/>
<polygon points="38.1,27.0 41.9,27.0 40.0,29.4" fill="#5a5a5a"/>
<path d="M54.3 24.4h6.4l1.3 1.3v7.2h-7.7z" fill="none" stroke="#8e8e8e" stroke-width="1"/><rect x="56" y="24.6" width="4" height="2.6" fill="#8e8e8e"/><rect x="56" y="29.4" width="4.2" height="3.4" fill="none" stroke="#8e8e8e" stroke-width="0.8"/>
<path d="M74 27.7l3.700-3.200v6.400z" fill="#5a5a5a"/><path d="M77.2 27.700h1.600c2.200 0 3.200 1.400 3.200 4.300" fill="none" stroke="#5a5a5a" stroke-width="1.400"/>
<polygon points="86.1,27.0 89.9,27.0 88.0,29.4" fill="#5a5a5a"/>
<path d="M106 27.700l-3.700-3.200v6.400z" fill="#9a9a9a"/><path d="M102.800 27.700h-1.600c-2.200 0-3.200 1.400-3.200 4.300" fill="none" stroke="#9a9a9a" stroke-width="1.400"/>
<polygon points="109.6,27.0 113.4,27.0 111.5,29.4" fill="#9a9a9a"/>
<path d="M126.4 31l4.6-4.2l4.6 4.2h-1.1v4h-2.3v-2.6h-2.4v2.6h-2.3v-4z" fill="#8c8c8c"/><rect x="133" y="27.2" width="1.2" height="2" fill="#8c8c8c"/>
<path d="M466.4 26.4l4 1.6v4.8l-4 2l-4-2v-4.8z" fill="#f08a2a"/><path d="M462.4 28l4 1.8l4-1.8l-4-1.6z" fill="#f6b26a"/><path d="M466.4 29.8v5l4-2v-4.8z" fill="#d86d12"/>
<path d="M883.300 27.100l4.600 4.600M887.900 27.100l-4.600 4.600" stroke="#555" stroke-width="0.9"/>
<path d="M899.6 29.4h7.6M903.4 25.6v7.6" stroke="#555" stroke-width="1.2"/>
<circle cx="924.2" cy="28.8" r="3.9" fill="none" stroke="#4a4a4a" stroke-width="1.7"/><path d="M920 25.6l4 0.4l-1.8 3.4z" fill="#4a4a4a"/><path d="M921.6 29.2l2.400 -2" stroke="#c9c9c9" stroke-width="0.9"/>
<circle cx="944" cy="28.8" r="5" fill="#8a8a8a"/><circle cx="944" cy="28.8" r="3.900" fill="#505050"/><path d="M944 26.2v2.8h2.400" stroke="#bdbdbd" stroke-width="0.9" fill="none"/>
<path d="M960.4 31.6c1.4-1 1.2-3 1.6-4.6c0.4-1.4 1.2-2 2-2s1.6 0.6 2 2c0.4 1.6 0.2 3.6 1.6 4.6z" fill="#4a4a4a"/><rect x="963.2" y="32" width="1.8" height="1.2" fill="#4a4a4a"/><rect x="963.6" y="23.8" width="1" height="1.4" fill="#4a4a4a"/>
<circle cx="984.3" cy="28.8" r="4.7" fill="#4a4a4a"/>
<circle cx="1007.8" cy="28.5" r="7.600" fill="#f3f3f3"/>
<polygon points="6.4,100.0 9.2,98.2 9.2,101.8" fill="#222"/><polygon points="9.6,100.0 12.4,98.2 12.4,101.8" fill="#222"/><circle cx="175.4" cy="100" r="2.8" fill="#222"/><path d="M173.9 100h3" stroke="#ddd" stroke-width="0.8"/>
<path d="M13.4 120.2h6.6v-6.6z" fill="#8a8a8a" stroke="#222" stroke-width="0.9" stroke-linejoin="round"/><path d="M26.8 117.2c2.3-3.5 6.9-3.5 9.2 0c-2.300 3.5-6.900 3.5-9.200 0z" fill="#8a8a8a"/><circle cx="31.4" cy="117.2" r="1.9" fill="#8a8a8a" stroke="#c8c8c8" stroke-width="0.6"/><circle cx="31.4" cy="117.2" r="0.800" fill="#6a6a6a"/><polygon points="42.8,114.5 44.8,112.5 51.0,112.5 49.0,114.5" fill="#fbfbfb" stroke="#f4f4f4" stroke-width="0.4" stroke-linejoin="round"/><polygon points="49.0,114.5 51.0,112.5 51.0,119.2 49.0,121.2" fill="#bfc5cf" stroke="#f4f4f4" stroke-width="0.4" stroke-linejoin="round"/><polygon points="42.8,114.5 49.0,114.5 49.0,121.2 42.8,121.2" fill="#e9edf3" stroke="#f4f4f4" stroke-width="0.4" stroke-linejoin="round"/><circle cx="162.1" cy="117.4" r="3.4" fill="#fff" stroke="#222" stroke-width="0.9"/><circle cx="162.1" cy="117.4" r="1.4" fill="#222"/>
<path d="M25.2 127.8v7.6l5.4-3.8z" fill="#fff" stroke="#333" stroke-width="1" stroke-linejoin="round"/><polygon points="47.31,130.67 47.40,131.59 46.03,132.25 45.84,132.89 46.61,134.20 46.02,134.91 44.59,134.41 44.00,134.73 43.62,136.19 42.70,136.28 42.04,134.92 41.40,134.73 40.09,135.49 39.38,134.91 39.87,133.47 39.56,132.89 38.09,132.50 38.00,131.59 39.37,130.92 39.56,130.28 38.79,128.97 39.38,128.26 40.81,128.76 41.40,128.44 41.78,126.98 42.70,126.89 43.36,128.25 44.00,128.44 45.31,127.68 46.02,128.26 45.53,129.70 45.84,130.28" fill="#8c8c8c"/><circle cx="42.7" cy="131.6" r="1.9" fill="#f1f1f1"/>
<path d="M25.2 142.4v7.6l5.4-3.8z" fill="#fff" stroke="#333" stroke-width="1" stroke-linejoin="round"/><path d="M37.8 142.7h3.4l0.8 1h5.4v6h-9.6z" fill="#8e8e8e"/>
<path d="M25.2 157.0v7.6l5.4-3.8z" fill="#fff" stroke="#333" stroke-width="1" stroke-linejoin="round"/><path d="M37.8 157.3h3.4l0.8 1h5.4v6h-9.6z" fill="#8e8e8e"/>
<path d="M25.2 171.5v7.6l5.4-3.8z" fill="#fff" stroke="#333" stroke-width="1" stroke-linejoin="round"/><path d="M38.0 175.5c2.3-3.4 6.9-3.4 9.2 0c-2.300 3.4-6.900 3.4-9.200 0z" fill="#f6f6f6" stroke="#c4c4c4" stroke-width="0.8"/><circle cx="42.6" cy="175.5" r="1.6" fill="none" stroke="#c4c4c4" stroke-width="0.7"/><path d="M39.8 177.8l5.6 -4.600" stroke="#c4c4c4" stroke-width="0.7"/><path d="M53.0 171.8h3.4l0.8 1h5.4v6h-9.6z" fill="#8e8e8e"/>
<path d="M24.4 193.1h6.6v-6.6z" fill="#8a8a8a" stroke="#222" stroke-width="0.9" stroke-linejoin="round"/><path d="M37.9 190.1c2.3-3.5 6.9-3.5 9.2 0c-2.300 3.5-6.900 3.5-9.200 0z" fill="#8a8a8a"/><circle cx="42.5" cy="190.1" r="1.9" fill="#8a8a8a" stroke="#c8c8c8" stroke-width="0.6"/><circle cx="42.5" cy="190.1" r="0.800" fill="#6a6a6a"/><path d="M53.0 186.4h3.4l0.8 1h5.4v6h-9.6z" fill="#8e8e8e"/>
<path d="M48.9 204.7c2.3-3.5 6.9-3.5 9.2 0c-2.300 3.5-6.900 3.5-9.200 0z" fill="#8a8a8a"/><circle cx="53.5" cy="204.7" r="1.9" fill="#8a8a8a" stroke="#c8c8c8" stroke-width="0.6"/><circle cx="53.5" cy="204.7" r="0.800" fill="#6a6a6a"/><rect x="64.1" y="199.9" width="9.2" height="9.2" rx="2" fill="#fff" stroke="#555" stroke-width="0.8"/><rect x="66.4" y="203.3" width="4.6" height="5" fill="#d4dae6"/>
<path d="M48.9 219.3c2.3-3.5 6.9-3.5 9.2 0c-2.300 3.5-6.900 3.5-9.200 0z" fill="#8a8a8a"/><circle cx="53.5" cy="219.3" r="1.9" fill="#8a8a8a" stroke="#c8c8c8" stroke-width="0.6"/><circle cx="53.5" cy="219.3" r="0.800" fill="#6a6a6a"/><rect x="64.1" y="214.5" width="9.2" height="9.2" rx="2" fill="#fff" stroke="#555" stroke-width="0.8"/><rect x="66.4" y="217.9" width="4.6" height="5" fill="#d4dae6"/>
<path d="M48.9 233.9c2.3-3.5 6.9-3.5 9.2 0c-2.300 3.5-6.900 3.5-9.200 0z" fill="#8a8a8a"/><circle cx="53.5" cy="233.9" r="1.9" fill="#8a8a8a" stroke="#c8c8c8" stroke-width="0.6"/><circle cx="53.5" cy="233.9" r="0.800" fill="#6a6a6a"/><rect x="64.1" y="229.1" width="9.2" height="9.2" rx="2" fill="#fff" stroke="#555" stroke-width="0.8"/><rect x="66.4" y="232.5" width="4.6" height="5" fill="#d4dae6"/>
<path d="M48.9 248.5c2.3-3.5 6.9-3.5 9.2 0c-2.300 3.5-6.900 3.5-9.200 0z" fill="#8a8a8a"/><circle cx="53.5" cy="248.5" r="1.9" fill="#8a8a8a" stroke="#c8c8c8" stroke-width="0.6"/><circle cx="53.5" cy="248.5" r="0.800" fill="#6a6a6a"/><rect x="64.1" y="243.7" width="9.2" height="9.2" rx="2" fill="#fff" stroke="#555" stroke-width="0.8"/><rect x="66.4" y="247.1" width="4.6" height="5" fill="#d4dae6"/>
<path d="M48.9 263.1c2.3-3.5 6.9-3.5 9.2 0c-2.300 3.5-6.900 3.5-9.200 0z" fill="#8a8a8a"/><circle cx="53.5" cy="263.1" r="1.9" fill="#8a8a8a" stroke="#c8c8c8" stroke-width="0.6"/><circle cx="53.5" cy="263.1" r="0.800" fill="#6a6a6a"/><rect x="64.1" y="258.2" width="9.2" height="9.2" rx="2" fill="#fff" stroke="#555" stroke-width="0.8"/><rect x="66.4" y="261.7" width="4.6" height="5" fill="#d4dae6"/>
<path d="M24.4 280.6h6.6v-6.6z" fill="#8a8a8a" stroke="#222" stroke-width="0.9" stroke-linejoin="round"/><path d="M37.9 277.6c2.3-3.5 6.9-3.5 9.2 0c-2.300 3.5-6.900 3.5-9.200 0z" fill="#8a8a8a"/><circle cx="42.5" cy="277.6" r="1.9" fill="#8a8a8a" stroke="#c8c8c8" stroke-width="0.6"/><circle cx="42.5" cy="277.6" r="0.800" fill="#6a6a6a"/><path d="M53.0 273.9h3.4l0.8 1h5.4v6h-9.6z" fill="#8e8e8e"/>
<path d="M48.9 292.2c2.3-3.5 6.9-3.5 9.2 0c-2.300 3.5-6.900 3.5-9.200 0z" fill="#8a8a8a"/><circle cx="53.5" cy="292.2" r="1.9" fill="#8a8a8a" stroke="#c8c8c8" stroke-width="0.6"/><circle cx="53.5" cy="292.2" r="0.800" fill="#6a6a6a"/><path d="M64.2 287.7h8.2v8h-8.2z" fill="none" stroke="#7a7a7a" stroke-width="0.8" stroke-dasharray="8.2 0"/><rect x="63.6" y="287.1" width="1.3" height="1.3" fill="#2f8fe6"/><rect x="71.7" y="287.1" width="1.3" height="1.3" fill="#2f8fe6"/><rect x="63.6" y="295.1" width="1.3" height="1.3" fill="#2f8fe6"/><rect x="69.5" y="292.1" width="4.6" height="4.6" fill="#f1f1f1"/><path d="M69.9 295.8l3.2-3.4" stroke="#f2b233" stroke-width="1.5"/><circle cx="72.9" cy="292.6" r="0.9" fill="#e65050"/><path d="M69.0 296.6l1.3-0.3l-1-1z" fill="#444"/>
<path d="M48.9 306.8c2.3-3.5 6.9-3.5 9.2 0c-2.300 3.5-6.900 3.5-9.200 0z" fill="#8a8a8a"/><circle cx="53.5" cy="306.8" r="1.9" fill="#8a8a8a" stroke="#c8c8c8" stroke-width="0.6"/><circle cx="53.5" cy="306.8" r="0.800" fill="#6a6a6a"/><path d="M64.2 302.3h8.2v8h-8.2z" fill="none" stroke="#7a7a7a" stroke-width="0.8" stroke-dasharray="8.2 0"/><rect x="63.6" y="301.7" width="1.3" height="1.3" fill="#2f8fe6"/><rect x="71.7" y="301.7" width="1.3" height="1.3" fill="#2f8fe6"/><rect x="63.6" y="309.7" width="1.3" height="1.3" fill="#2f8fe6"/><rect x="69.5" y="306.7" width="4.6" height="4.6" fill="#f1f1f1"/><path d="M69.9 310.4l3.2-3.4" stroke="#f2b233" stroke-width="1.5"/><circle cx="72.9" cy="307.2" r="0.9" fill="#e65050"/><path d="M69.0 311.2l1.3-0.3l-1-1z" fill="#444"/>
<path d="M48.9 321.4c2.3-3.5 6.9-3.5 9.2 0c-2.300 3.5-6.900 3.5-9.200 0z" fill="#8a8a8a"/><circle cx="53.5" cy="321.4" r="1.9" fill="#8a8a8a" stroke="#c8c8c8" stroke-width="0.6"/><circle cx="53.5" cy="321.4" r="0.800" fill="#6a6a6a"/><path d="M64.2 316.9h8.2v8h-8.2z" fill="none" stroke="#7a7a7a" stroke-width="0.8" stroke-dasharray="8.2 0"/><rect x="63.6" y="316.2" width="1.3" height="1.3" fill="#2f8fe6"/><rect x="71.7" y="316.2" width="1.3" height="1.3" fill="#2f8fe6"/><rect x="63.6" y="324.2" width="1.3" height="1.3" fill="#2f8fe6"/><rect x="69.5" y="321.3" width="4.6" height="4.6" fill="#f1f1f1"/><path d="M69.9 325.0l3.2-3.4" stroke="#f2b233" stroke-width="1.5"/><circle cx="72.9" cy="321.8" r="0.9" fill="#e65050"/><path d="M69.0 325.8l1.3-0.3l-1-1z" fill="#444"/>
<path d="M48.9 336.0c2.3-3.4 6.9-3.4 9.2 0c-2.300 3.4-6.900 3.4-9.200 0z" fill="#f6f6f6" stroke="#c4c4c4" stroke-width="0.8"/><circle cx="53.5" cy="336.0" r="1.6" fill="none" stroke="#c4c4c4" stroke-width="0.7"/><path d="M50.7 338.3l5.6 -4.600" stroke="#c4c4c4" stroke-width="0.7"/><path d="M64.3 331.4h8.2v8h-8.2z" fill="none" stroke="#7a7a7a" stroke-width="0.8" stroke-dasharray="8.2 0"/><rect x="63.7" y="330.8" width="1.2" height="1.2" fill="#444"/><rect x="71.9" y="330.8" width="1.2" height="1.2" fill="#444"/><rect x="63.7" y="338.8" width="1.2" height="1.2" fill="#444"/><rect x="69.0" y="336.0" width="5.6" height="4.6" fill="#f1f1f1"/><path d="M70.5 337.9v-1.2a1.3 1.3 0 0 1 2.6 0v1.2" fill="none" stroke="#d9534f" stroke-width="0.9"/><rect x="69.4" y="337.7" width="4.8" height="2.9" rx="0.5" fill="#d9534f"/>
<path d="M48.9 350.6c2.3-3.5 6.9-3.5 9.2 0c-2.300 3.5-6.900 3.5-9.200 0z" fill="#8a8a8a"/><circle cx="53.5" cy="350.6" r="1.9" fill="#8a8a8a" stroke="#c8c8c8" stroke-width="0.6"/><circle cx="53.5" cy="350.6" r="0.800" fill="#6a6a6a"/><path d="M64.3 346.0h8.2v8h-8.2z" fill="none" stroke="#7a7a7a" stroke-width="0.8" stroke-dasharray="8.2 0"/><rect x="63.7" y="345.4" width="1.2" height="1.2" fill="#444"/><rect x="71.9" y="345.4" width="1.2" height="1.2" fill="#444"/><rect x="63.7" y="353.4" width="1.2" height="1.2" fill="#444"/><rect x="69.0" y="350.6" width="5.6" height="4.6" fill="#f1f1f1"/><path d="M70.5 352.5v-1.2a1.3 1.3 0 0 1 2.6 0v1.2" fill="none" stroke="#d9534f" stroke-width="0.9"/><rect x="69.4" y="352.3" width="4.8" height="2.9" rx="0.5" fill="#d9534f"/>
<polygon points="37.8,367.7 43.5,367.7 45.1,366.1 45.1,367.5 43.5,369.2 37.8,369.2" fill="#cdcdcd"/><polygon points="37.8,361.7 39.4,360.1 45.1,360.1 43.5,361.7" fill="#86c6f6"/><polygon points="43.5,361.7 45.1,360.1 45.1,366.1 43.5,367.7" fill="#3e90cf"/><polygon points="37.8,361.7 43.5,361.7 43.5,367.7 37.8,367.7" fill="#62aee6"/><path d="M46.6 367.8v-6.6" stroke="#333" stroke-width="0.800"/><polygon points="46.6,360.5 45.8,361.7 47.4,361.7" fill="#333"/>
<polygon points="38.1,376.3 40.1,374.3 47.3,374.3 45.3,376.3" fill="#f6f6f6" stroke="#8a8a8a" stroke-width="0.8" stroke-linejoin="round"/><polygon points="45.3,376.3 47.3,374.3 47.3,381.8 45.3,383.8" fill="#c8c8c8" stroke="#8a8a8a" stroke-width="0.8" stroke-linejoin="round"/><polygon points="38.1,376.3 45.3,376.3 45.3,383.8 38.1,383.8" fill="#ececec" stroke="#8a8a8a" stroke-width="0.8" stroke-linejoin="round"/><polygon points="39.1,378.5 41.1,378.5 41.1,380.9 39.1,382.9" fill="#3d8fcd"/><polygon points="39.1,382.9 41.1,380.9 43.9,380.9 43.9,382.9" fill="#6cb6ee"/>
<polygon points="37.8,396.9 43.5,396.9 45.1,395.3 45.1,396.7 43.5,398.4 37.8,398.4" fill="#cdcdcd"/><polygon points="37.8,390.9 39.4,389.3 45.1,389.3 43.5,390.9" fill="#86c6f6"/><polygon points="43.5,390.9 45.1,389.3 45.1,395.3 43.5,396.9" fill="#3e90cf"/><polygon points="37.8,390.9 43.5,390.9 43.5,396.9 37.8,396.9" fill="#62aee6"/><path d="M46.6 397.0v-6.6" stroke="#333" stroke-width="0.800"/><polygon points="46.6,389.7 45.8,390.9 47.4,390.9" fill="#333"/>
<polygon points="37.8,411.5 43.5,411.5 45.1,409.9 45.1,411.3 43.5,413.0 37.8,413.0" fill="#cdcdcd"/><polygon points="37.8,405.5 39.4,403.9 45.1,403.9 43.5,405.5" fill="#86c6f6"/><polygon points="43.5,405.5 45.1,403.9 45.1,409.9 43.5,411.5" fill="#3e90cf"/><polygon points="37.8,405.5 43.5,405.5 43.5,411.5 37.8,411.5" fill="#62aee6"/><path d="M46.6 411.6v-6.6" stroke="#333" stroke-width="0.800"/><polygon points="46.6,404.3 45.8,405.5 47.4,405.5" fill="#333"/>
<polygon points="37.8,426.1 43.5,426.1 45.1,424.5 45.1,425.9 43.5,427.6 37.8,427.6" fill="#cdcdcd"/><polygon points="37.8,420.1 39.4,418.5 45.1,418.5 43.5,420.1" fill="#86c6f6"/><polygon points="43.5,420.1 45.1,418.5 45.1,424.5 43.5,426.1" fill="#3e90cf"/><polygon points="37.8,420.1 43.5,420.1 43.5,426.1 37.8,426.1" fill="#62aee6"/><path d="M46.6 426.2v-6.6" stroke="#333" stroke-width="0.800"/><polygon points="46.6,418.9 45.8,420.1 47.4,420.1" fill="#333"/>
<polygon points="37.8,440.7 43.5,440.7 45.1,439.1 45.1,440.5 43.5,442.2 37.8,442.2" fill="#cdcdcd"/><polygon points="37.8,434.7 39.4,433.1 45.1,433.1 43.5,434.7" fill="#86c6f6"/><polygon points="43.5,434.7 45.1,433.1 45.1,439.1 43.5,440.7" fill="#3e90cf"/><polygon points="37.8,434.7 43.5,434.7 43.5,440.7 37.8,440.7" fill="#62aee6"/><path d="M46.6 440.8v-6.6" stroke="#333" stroke-width="0.800"/><polygon points="46.6,433.5 45.8,434.7 47.4,434.7" fill="#333"/>
<polygon points="37.8,455.3 43.5,455.3 45.1,453.7 45.1,455.1 43.5,456.8 37.8,456.8" fill="#cdcdcd"/><polygon points="37.8,449.3 39.4,447.7 45.1,447.7 43.5,449.3" fill="#86c6f6"/><polygon points="43.5,449.3 45.1,447.7 45.1,453.7 43.5,455.3" fill="#3e90cf"/><polygon points="37.8,449.3 43.5,449.3 43.5,455.3 37.8,455.3" fill="#62aee6"/><path d="M46.6 455.4v-6.6" stroke="#333" stroke-width="0.800"/><polygon points="46.6,448.1 45.8,449.3 47.4,449.3" fill="#333"/>
<polygon points="37.8,469.8 43.5,469.8 45.1,468.2 45.1,469.6 43.5,471.3 37.8,471.3" fill="#cdcdcd"/><polygon points="37.8,463.8 39.4,462.2 45.1,462.2 43.5,463.8" fill="#86c6f6"/><polygon points="43.5,463.8 45.1,462.2 45.1,468.2 43.5,469.8" fill="#3e90cf"/><polygon points="37.8,463.8 43.5,463.8 43.5,469.8 37.8,469.8" fill="#62aee6"/><path d="M46.6 469.9v-6.6" stroke="#333" stroke-width="0.800"/><polygon points="46.6,462.6 45.8,463.8 47.4,463.8" fill="#333"/>
<polygon points="37.8,484.4 43.5,484.4 45.1,482.8 45.1,484.2 43.5,485.9 37.8,485.9" fill="#cdcdcd"/><polygon points="37.8,478.4 39.4,476.8 45.1,476.8 43.5,478.4" fill="#86c6f6"/><polygon points="43.5,478.4 45.1,476.8 45.1,482.8 43.5,484.4" fill="#3e90cf"/><polygon points="37.8,478.4 43.5,478.4 43.5,484.4 37.8,484.4" fill="#62aee6"/><path d="M46.6 484.5v-6.6" stroke="#333" stroke-width="0.800"/><polygon points="46.6,477.2 45.8,478.4 47.4,478.4" fill="#333"/>
<polygon points="37.8,499.0 43.5,499.0 45.1,497.4 45.1,498.8 43.5,500.5 37.8,500.5" fill="#cdcdcd"/><polygon points="37.8,493.0 39.4,491.4 45.1,491.4 43.5,493.0" fill="#86c6f6"/><polygon points="43.5,493.0 45.1,491.4 45.1,497.4 43.5,499.0" fill="#3e90cf"/><polygon points="37.8,493.0 43.5,493.0 43.5,499.0 37.8,499.0" fill="#62aee6"/><path d="M46.6 499.1v-6.6" stroke="#333" stroke-width="0.800"/><polygon points="46.6,491.8 45.8,493.0 47.4,493.0" fill="#333"/>
<polygon points="37.8,513.6 43.5,513.6 45.1,512.0 45.1,513.4 43.5,515.1 37.8,515.1" fill="#cdcdcd"/><polygon points="37.8,507.6 39.4,506.0 45.1,506.0 43.5,507.6" fill="#86c6f6"/><polygon points="43.5,507.6 45.1,506.0 45.1,512.0 43.5,513.6" fill="#3e90cf"/><polygon points="37.8,507.6 43.5,507.6 43.5,513.6 37.8,513.6" fill="#62aee6"/><path d="M46.6 513.7v-6.6" stroke="#333" stroke-width="0.800"/><polygon points="46.6,506.4 45.8,507.6 47.4,507.6" fill="#333"/>
<ellipse cx="446.9" cy="531.6" rx="4.6" ry="1.9" fill="none" stroke="#444" stroke-width="1"/><path d="M446.9 526v10" stroke="#666" stroke-width="1.1"/><polygon points="441.6,532.6 444.6,531.4 444.4,534.2" fill="#333"/><polygon points="454.5,529.9 457.9,529.9 456.2,532.1" fill="#333"/>
<rect x="462.4" y="528.2" width="9" height="7.4" rx="1" fill="#e4e4ea" stroke="#7a7a86" stroke-width="0.9"/><rect x="464.2" y="530.6" width="5.4" height="3" fill="#8a8a9a"/><path d="M463.6 528.2l1-1.2h1.6l1 1.2M468 528.2l0.8-1.2h1.4l0.8 1.2" fill="#7a7a86"/><path d="M479.4 530.6l-1.4-1.4c-0.8-0.6-1.6 0.2-1 1l2.4 4c0.6 1 1.6 1.8 3 1.8h1.6c1.6 0 2.6-1.2 2.8-2.6l0.6-4c0.1-0.9-1.1-1.1-1.3-0.2l-0.4 1.6l0.2-3.4c0-1-1.4-1-1.5 0l-0.2 3l-0.2-3.8c0-1-1.5-1-1.5 0v3.8l-0.6-3.2c-0.2-1-1.6-0.8-1.5 0.2z" fill="#f4f4f8" stroke="#666" stroke-width="0.7" stroke-linejoin="round"/><circle cx="496.6" cy="530.4" r="2.9" fill="#dfeef2" stroke="#555" stroke-width="0.9"/><path d="M498.8 532.8l2.6 2.6" stroke="#333" stroke-width="1.5"/><path d="M501.8 527v3M500.6 529.8h2.4" stroke="#444" stroke-width="0.7"/><polygon points="501.8,526.2 500.8,527.8 502.8,527.8" fill="#444"/><rect x="509.2" y="526.4" width="9.4" height="9.6" fill="none" stroke="#aaa" stroke-width="0.6" stroke-dasharray="0.8 1.4"/><circle cx="513.2" cy="530" r="3.6" fill="#dff0f2" stroke="#666" stroke-width="0.9"/><path d="M516 533l2.8 2.6" stroke="#222" stroke-width="1.6"/><polygon points="522.1,529.9 525.5,529.9 523.8,532.1" fill="#333"/>
<rect x="529.3" y="526.4" width="9.6" height="7.6" rx="0.6" fill="#d8dde6" stroke="#777" stroke-width="0.8"/><rect x="530.8" y="528" width="6.6" height="4.4" fill="#6f9fdc"/><path d="M532 534h4.2l0.8 1.8h-5.800z" fill="#888"/><polygon points="540.8,529.9 544.2,529.9 542.5,532.1" fill="#333"/>
<rect x="548.4" y="526.6" width="9.2" height="9.2" rx="0.8" fill="#e9e9ee" stroke="#777" stroke-width="0.8"/><path d="M550.7 526.6v9.2M553 526.6v9.2M555.3 526.6v9.2M548.4 528.9h9.200M548.4 531.2h9.200M548.4 533.500h9.200" stroke="#8a8a94" stroke-width="0.5"/><polygon points="559.3,529.9 562.7,529.9 561.0,532.1" fill="#333"/>
<rect x="567" y="527.2" width="8.800" height="7.800" fill="#5f86c4"/><rect x="568" y="528.2" width="2.900" height="2.500" fill="#8db3ea"/><rect x="571.900" y="528.2" width="2.900" height="2.500" fill="#8db3ea"/><rect x="568" y="531.700" width="2.900" height="2.300" fill="#8db3ea"/><rect x="571.900" y="531.700" width="2.900" height="2.300" fill="#8db3ea"/><polygon points="578.1,529.9 581.5,529.9 579.8,532.1" fill="#333"/>

<circle cx="175" cy="532.2" r="2.6" fill="#222"/><path d="M173.6 532.2h2.8M175 530.8v2.8" stroke="#fff" stroke-width="0.7"/>
</svg>
</div>
</body></html>
